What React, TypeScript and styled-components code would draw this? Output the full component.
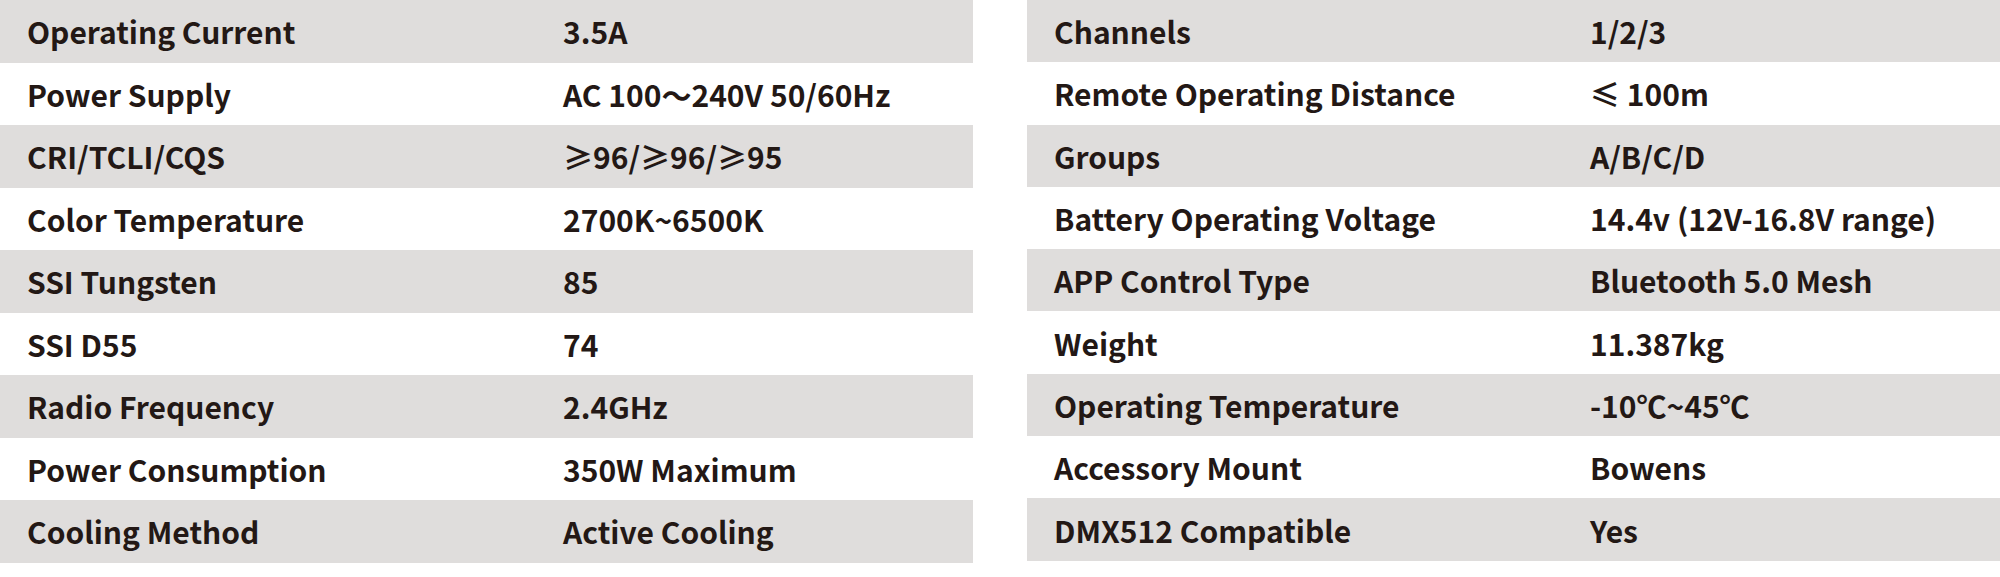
import React from "react";
import styled, { createGlobalStyle } from "styled-components";

const GlobalStyle = createGlobalStyle`
  html, body {
    margin: 0;
    padding: 0;
    background: #ffffff;
  }
`;

const Page = styled.div`
  display: flex;
  gap: 54px;
  width: 2000px;
  font-family: "Noto Sans CJK SC", "Noto Sans", sans-serif;
  font-weight: 700;
  color: #231815;
`;

const Table = styled.div<{ rowHeight: number }>`
  display: grid;
  grid-auto-rows: ${({ rowHeight }) => rowHeight}px;
  width: 973px;
`;

const Row = styled.div<{ shaded: boolean }>`
  display: grid;
  grid-template-columns: 563px 1fr;
  align-items: center;
  background: ${({ shaded }) => (shaded ? "#dfdddc" : "#ffffff")};
`;

const Label = styled.span`
  padding-left: 27px;
  font-size: 30px;
  line-height: 1;
  white-space: nowrap;
`;

const Value = styled.span`
  font-size: 30px;
  line-height: 1;
  white-space: nowrap;
`;

type Spec = [string, string];

const left: Spec[] = [
  ["Operating Current", "3.5A"],
  ["Power Supply", "AC 100～240V 50/60Hz"],
  ["CRI/TCLI/CQS", "≥96/≥96/≥95"],
  ["Color Temperature", "2700K~6500K"],
  ["SSI Tungsten", "85"],
  ["SSI D55", "74"],
  ["Radio Frequency", "2.4GHz"],
  ["Power Consumption", "350W Maximum"],
  ["Cooling Method", "Active Cooling"],
];

const right: Spec[] = [
  ["Channels", "1/2/3"],
  ["Remote Operating Distance", "≤ 100m"],
  ["Groups", "A/B/C/D"],
  ["Battery Operating Voltage", "14.4v (12V-16.8V range)"],
  ["APP Control Type", "Bluetooth 5.0 Mesh"],
  ["Weight", "11.387kg"],
  ["Operating Temperature", "-10℃~45℃"],
  ["Accessory Mount", "Bowens"],
  ["DMX512 Compatible", "Yes"],
];

function SpecTable({ specs, rowHeight }: { specs: Spec[]; rowHeight: number }) {
  return (
    <Table rowHeight={rowHeight}>
      {specs.map(([name, value], i) => (
        <Row key={name} shaded={i % 2 === 0}>
          <Label>{name}</Label>
          <Value>{value}</Value>
        </Row>
      ))}
    </Table>
  );
}

export default function App() {
  return (
    <>
      <GlobalStyle />
      <Page lang="zh-CN">
        <SpecTable specs={left} rowHeight={62.5} />
        <SpecTable specs={right} rowHeight={62.3} />
      </Page>
    </>
  );
}
